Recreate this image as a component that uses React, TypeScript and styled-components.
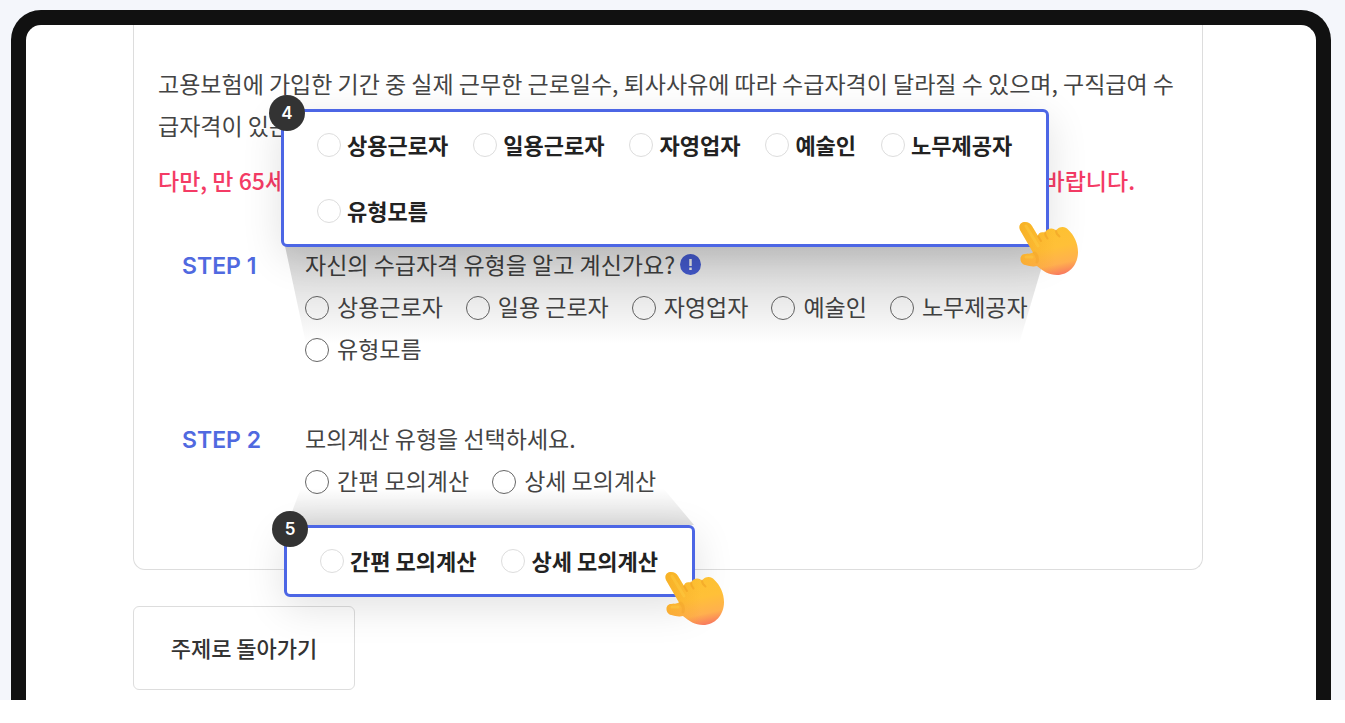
import React from 'react';
import styled, { createGlobalStyle } from 'styled-components';

const GlobalStyle = createGlobalStyle`
  * { box-sizing: border-box; }
  body {
    margin: 0;
    background: #fff;
    font-family: "Noto Sans CJK KR", "Noto Sans", sans-serif;
    color: #444;
  }
`;

const Stage = styled.main`
  background: #f4f6fb;
  padding: 10px 14px 0 11px;
`;

const Device = styled.section`
  position: relative;
  border: 15px solid #111;
  border-bottom: 0;
  border-radius: 30px 30px 0 0;
  background: #fff;
  padding: 0 113px 10px 107px;
`;

const Card = styled.article`
  border: 1px solid #ddd;
  border-top: 0;
  border-radius: 0 0 12px 12px;
  padding: 37px 24px 67px;
`;

const Paragraph = styled.p`
  margin: 0;
  font-size: 23px;
  line-height: 42px;
`;

const Warning = styled.p`
  display: flex;
  justify-content: space-between;
  margin: 13px 43px 43px 0;
  font-size: 23px;
  font-weight: 500;
  line-height: 42px;
  color: #f43b65;
`;

const Step = styled.fieldset`
  display: flex;
  gap: 43px;
  margin: 0;
  padding: 0 0 0 24px;
  border: 0;
  font-size: 23px;
  line-height: 42px;
  & + & { margin-top: 48px; }
`;

const StepName = styled.div`
  flex: 0 0 80px;
  padding-top: 1px;
  font-family: Inter, "Noto Sans CJK KR", sans-serif;
  font-size: 23px;
  font-weight: 600;
  color: #5069e0;
`;

const StepBody = styled.div`
  flex: 1;
  min-width: 0;
`;

const Question = styled.div`
  display: flex;
  align-items: center;
  gap: 5px;
  padding-bottom: 2px;
  line-height: 40px;
`;

const Options = styled.div<{ $callout?: boolean }>`
  display: flex;
  flex-wrap: wrap;
  column-gap: ${(p) => (p.$callout ? 25 : 23)}px;
  max-width: 750px;
`;

const Option = styled.label<{ $callout?: boolean }>`
  display: flex;
  align-items: center;
  gap: ${(p) => (p.$callout ? 6 : 8)}px;
  white-space: nowrap;
  line-height: ${(p) => (p.$callout ? 64 : 40)}px;
  ${(p) => p.$callout && 'font-size: 22px; font-weight: 700; color: #222;'}
`;

const OptionText = styled.span`
  padding-bottom: 2px;
`;

const Radio = styled.input<{ $callout?: boolean }>`
  appearance: none;
  width: 24px;
  height: 24px;
  margin: ${(p) => (p.$callout ? 0 : 2)}px 0 0;
  border: 1px solid ${(p) => (p.$callout ? '#ddd' : '#666')};
  border-radius: 50%;
  background: #fff;
  &:checked { box-shadow: inset 0 0 0 5px #fff; background: #4c66e5; }
`;

const BackButton = styled.button`
  display: block;
  width: 222px;
  height: 84px;
  margin-top: 36px;
  padding: 0 0 2px;
  border: 1px solid #ddd;
  border-radius: 6px;
  background: #fff;
  color: #333;
  font: 500 22px "Noto Sans CJK KR", sans-serif;
`;

const Callout = styled.aside<{ $top: number; $left: number; $width: number }>`
  position: absolute;
  top: ${(p) => p.$top}px;
  left: ${(p) => p.$left}px;
  width: ${(p) => p.$width}px;
  padding-left: 33px;
  border: 3px solid #4c66e5;
  border-radius: 6px;
  background: #fff;
  box-shadow: 0 10px 40px rgba(0, 0, 0, 0.12);
`;

const Badge = styled.span`
  position: absolute;
  top: -17px;
  left: -15px;
  width: 36px;
  height: 36px;
  border-radius: 50%;
  background: #333;
  color: #fff;
  text-align: center;
  font: 600 17px/36px Inter, sans-serif;
`;

const Beam = styled.div<{ $top: number; $left: number; $width: number; $height: number; $up?: boolean }>`
  position: absolute;
  top: ${(p) => p.$top}px;
  left: ${(p) => p.$left}px;
  width: ${(p) => p.$width}px;
  height: ${(p) => p.$height}px;
  background: linear-gradient(${(p) => (p.$up ? 'to top, rgba(0,0,0,.13)' : 'to bottom, rgba(0,0,0,.19)')}, rgba(0,0,0,0));
  clip-path: ${(p) =>
    p.$up
      ? 'polygon(14px 0, calc(100% - 31px) 0, 100% 100%, 0 100%)'
      : 'polygon(0 0, 100% 0, calc(100% - 29px) 100%, 21px 100%)'};
  pointer-events: none;
`;

const Pointer = styled.svg`
  position: absolute;
  right: -33px;
  bottom: -33px;
  width: 60px;
  height: 56px;
`;

const handOutline =
  'M1 9C-1 4 2.500 1 6 1C9 1 11.500 2.500 13 5L19 15C19 12 22 10.500 26 11.500C28 7 34 6 37 9.500C40 5 46.500 5 49 8.500C55 14 59 22 59 31C59 44 50 54 38 54C30 54 24 50 18 45C14 46 10 45 6.500 44C0 43 0 33 6 33C9 32.500 11.500 33 14 31.500Z';

function Hand({ id }: { id: string }) {
  return (
    <Pointer viewBox="0 0 60 56" aria-hidden="true">
      <defs>
        <linearGradient id={id} x1="24" y1="0" x2="36" y2="55" gradientUnits="userSpaceOnUse">
          <stop offset="0" stopColor="#fcc12e" />
          <stop offset=".5" stopColor="#ffc038" />
          <stop offset=".8" stopColor="#ffb04e" />
          <stop offset="1" stopColor="#f8795f" />
        </linearGradient>
        <linearGradient id={`${id}-shade`} x1="0" y1="0" x2="36" y2="0" gradientUnits="userSpaceOnUse">
          <stop offset="0" stopColor="#f09a1c" stopOpacity=".4" />
          <stop offset="1" stopColor="#f09a1c" stopOpacity="0" />
        </linearGradient>
      </defs>
      <path d={handOutline} fill={`url(#${id})`} />
      <path d={handOutline} fill={`url(#${id}-shade)`} />
      <path d="M19 15L22 20M26 11.500C26 14 27 16 28.500 17.500M37 9.500C37 12 38.500 14 40.500 15.500" fill="none" stroke="#e8921e" strokeWidth="2" strokeLinecap="round" opacity=".4" />
      <path d="M15.500 32C18 34 19 37 18 41" fill="none" stroke="#e8921e" strokeWidth="3" strokeLinecap="round" opacity=".25" />
      <path d="M7 5L19 25M7 36L13 36" fill="none" stroke="#ffcf45" strokeWidth="3" strokeLinecap="round" opacity=".4" />
    </Pointer>
  );
}

function Choices({ name, items, callout }: { name: string; items: string[]; callout?: boolean }) {
  return (
    <Options $callout={callout}>
      {items.map((item) => (
        <Option key={item} $callout={callout}>
          <Radio type="radio" name={name} $callout={callout} />
          <OptionText>{item}</OptionText>
        </Option>
      ))}
    </Options>
  );
}

export default function App() {
  return (
    <>
      <GlobalStyle />
      <Stage>
        <Device>
          <Card>
            <Paragraph>
              고용보험에 가입한 기간 중 실제 근무한 근로일수, 퇴사사유에 따라 수급자격이 달라질 수 있으며, 구직급여 수급자격이 있는
            </Paragraph>
            <Warning>
              <span>다만, 만 65세</span>
              <span>바랍니다.</span>
            </Warning>
            <Step>
              <StepName>STEP 1</StepName>
              <StepBody>
                <Question>
                  자신의 수급자격 유형을 알고 계신가요?
                  <svg width="21" height="21" viewBox="0 0 21 21" aria-hidden="true">
                    <circle cx="10.5" cy="10.5" r="10.5" fill="#4a62e0" />
                    <path d="M10.5 5v7M10.5 13.500v2.500" stroke="#fff" strokeWidth="2.500" />
                  </svg>
                </Question>
                <Choices name="worker" items={['상용근로자', '일용 근로자', '자영업자', '예술인', '노무제공자', '유형모름']} />
              </StepBody>
            </Step>
            <Step>
              <StepName>STEP 2</StepName>
              <StepBody>
                <Question>모의계산 유형을 선택하세요.</Question>
                <Choices name="mode" items={['간편 모의계산', '상세 모의계산']} />
              </StepBody>
            </Step>
          </Card>
          <BackButton type="button">주제로 돌아가기</BackButton>

          <Beam $top={221} $left={259} $width={763} $height={98} />
          <Callout $top={84} $left={255} $width={768}>
            <Choices callout name="worker-zoom" items={['상용근로자', '일용근로자', '자영업자', '예술인', '노무제공자', '유형모름']} />
            <Badge>4</Badge>
            <Hand id="hand-a" />
          </Callout>

          <Beam $up $top={463} $left={261} $width={407} $height={37} />
          <Callout $top={500} $left={258} $width={411}>
            <Choices callout name="mode-zoom" items={['간편 모의계산', '상세 모의계산']} />
            <Badge>5</Badge>
            <Hand id="hand-b" />
          </Callout>
        </Device>
      </Stage>
    </>
  );
}
